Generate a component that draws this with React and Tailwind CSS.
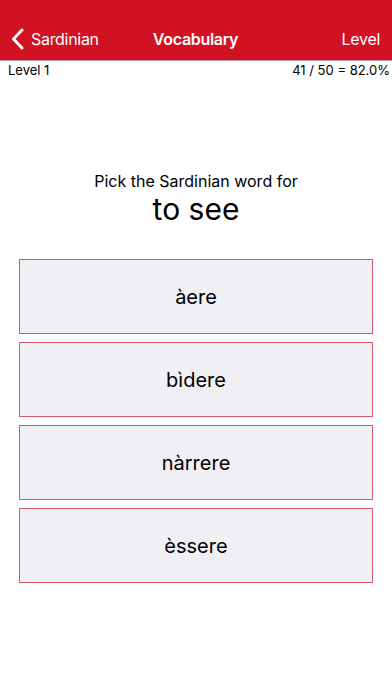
function BackChevron() {
  return (
    <svg width="13" height="22" viewBox="0 0 13 22" fill="none" className="shrink-0">
      <polyline
        points="11,2 2.5,11 11,20"
        stroke="white"
        strokeWidth="3"
        strokeLinecap="round"
        strokeLinejoin="round"
      />
    </svg>
  );
}

function App() {
  const choices = ["àere", "bìdere", "nàrrere", "èssere"];

  return (
    <div
      className="w-[392px] h-[696px] bg-white flex flex-col"
      style={{ fontFamily: "Inter, 'Liberation Sans', sans-serif" }}
    >
      <header className="h-[61px] bg-[#d01223] flex items-end pb-[9px] px-2 text-white border-b border-[#b8a0a4]">
        <div className="flex-1 flex items-center gap-[7px] pl-[3px]">
          <BackChevron />
          <span className="text-[16px] tracking-[-0.3px]">Sardinian</span>
        </div>
        <div className="text-[16px] font-semibold tracking-[-0.3px]">Vocabulary</div>
        <div className="flex-1 text-right text-[16px] tracking-[-0.3px] pr-[4px]">Level</div>
      </header>

      <div className="flex justify-between pl-2 pr-[2px] text-[13px] text-black leading-[18px]">
        <span>Level 1</span>
        <span>41 / 50 = 82.0%</span>
      </div>

      <div className="mt-[92px] text-center">
        <div className="text-[16px] leading-[20px]">Pick the Sardinian word for</div>
        <div className="text-[30px] leading-[36px]">to see</div>
      </div>

      <div className="mt-[32px] px-[19px] flex flex-col gap-[8px]">
        {choices.map((word) => (
          <button
            key={word}
            className="h-[75px] bg-[#efeff4] border border-[#d25a66] text-[20px] text-black"
          >
            {word}
          </button>
        ))}
      </div>
    </div>
  );
}

export default App;
